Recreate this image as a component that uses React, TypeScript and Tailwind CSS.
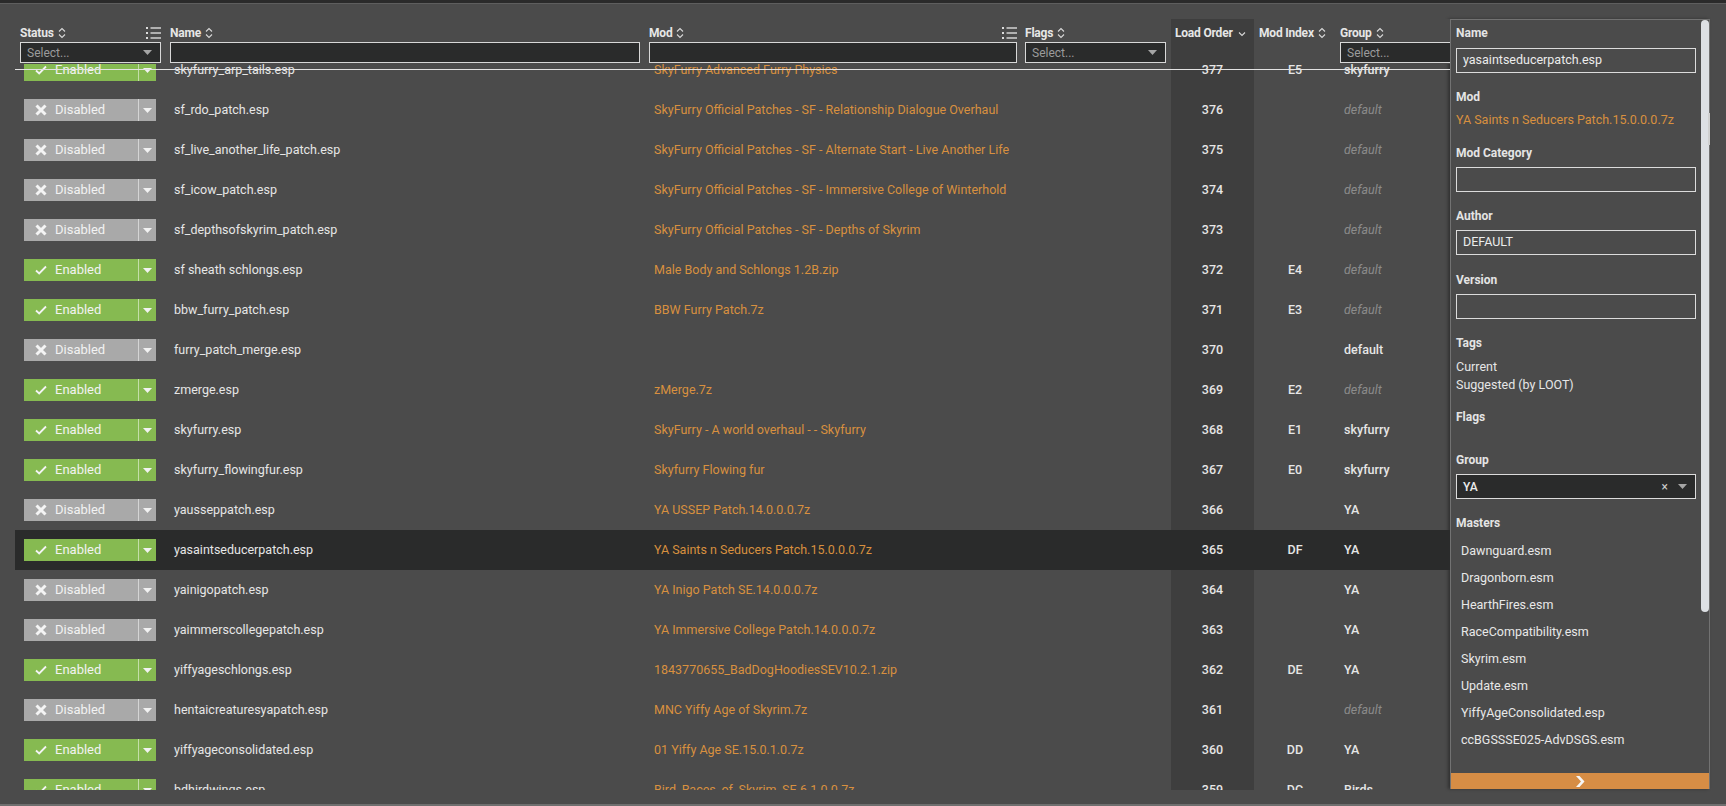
import React from "react";

type Row = {
  on: boolean;
  name: string;
  mod: string;
  lo: number;
  idx: string;
  group: string;
  dim?: boolean;
  selected?: boolean;
};

const ROWS: Row[] = [
  { on: true, name: "skyfurry_arp_tails.esp", mod: "SkyFurry Advanced Furry Physics", lo: 377, idx: "E5", group: "skyfurry" },
  { on: false, name: "sf_rdo_patch.esp", mod: "SkyFurry Official Patches - SF - Relationship Dialogue Overhaul", lo: 376, idx: "", group: "default", dim: true },
  { on: false, name: "sf_live_another_life_patch.esp", mod: "SkyFurry Official Patches - SF - Alternate Start - Live Another Life", lo: 375, idx: "", group: "default", dim: true },
  { on: false, name: "sf_icow_patch.esp", mod: "SkyFurry Official Patches - SF - Immersive College of Winterhold", lo: 374, idx: "", group: "default", dim: true },
  { on: false, name: "sf_depthsofskyrim_patch.esp", mod: "SkyFurry Official Patches - SF - Depths of Skyrim", lo: 373, idx: "", group: "default", dim: true },
  { on: true, name: "sf sheath schlongs.esp", mod: "Male Body and Schlongs 1.2B.zip", lo: 372, idx: "E4", group: "default", dim: true },
  { on: true, name: "bbw_furry_patch.esp", mod: "BBW Furry Patch.7z", lo: 371, idx: "E3", group: "default", dim: true },
  { on: false, name: "furry_patch_merge.esp", mod: "", lo: 370, idx: "", group: "default" },
  { on: true, name: "zmerge.esp", mod: "zMerge.7z", lo: 369, idx: "E2", group: "default", dim: true },
  { on: true, name: "skyfurry.esp", mod: "SkyFurry - A world overhaul - - Skyfurry", lo: 368, idx: "E1", group: "skyfurry" },
  { on: true, name: "skyfurry_flowingfur.esp", mod: "Skyfurry Flowing fur", lo: 367, idx: "E0", group: "skyfurry" },
  { on: false, name: "yausseppatch.esp", mod: "YA USSEP Patch.14.0.0.0.7z", lo: 366, idx: "", group: "YA" },
  { on: true, name: "yasaintseducerpatch.esp", mod: "YA Saints n Seducers Patch.15.0.0.0.7z", lo: 365, idx: "DF", group: "YA", selected: true },
  { on: false, name: "yainigopatch.esp", mod: "YA Inigo Patch SE.14.0.0.0.7z", lo: 364, idx: "", group: "YA" },
  { on: false, name: "yaimmerscollegepatch.esp", mod: "YA Immersive College Patch.14.0.0.0.7z", lo: 363, idx: "", group: "YA" },
  { on: true, name: "yiffyageschlongs.esp", mod: "1843770655_BadDogHoodiesSEV10.2.1.zip", lo: 362, idx: "DE", group: "YA" },
  { on: false, name: "hentaicreaturesyapatch.esp", mod: "MNC Yiffy Age of Skyrim.7z", lo: 361, idx: "", group: "default", dim: true },
  { on: true, name: "yiffyageconsolidated.esp", mod: "01 Yiffy Age SE.15.0.1.0.7z", lo: 360, idx: "DD", group: "YA" },
  { on: true, name: "bdhirdwings.esp", mod: "Bird_Races_of_Skyrim_SE.6.1.0.0.7z", lo: 359, idx: "DC", group: "Birds" },
];

const MASTERS = [
  "Dawnguard.esm",
  "Dragonborn.esm",
  "HearthFires.esm",
  "RaceCompatibility.esm",
  "Skyrim.esm",
  "Update.esm",
  "YiffyAgeConsolidated.esp",
  "ccBGSSSE025-AdvDSGS.esm",
];

function SortIcon() {
  return (
    <svg width="8" height="12" viewBox="0 0 8 12" className="ml-[4px] text-[#d8d8d8]">
      <path d="M1 4.5 L4 1.5 L7 4.5 M1 7.5 L4 10.5 L7 7.5" fill="none" stroke="currentColor" strokeWidth="1.1" />
    </svg>
  );
}

function SortDown() {
  return (
    <svg width="8" height="6" viewBox="0 0 8 6" className="ml-[5px] mt-[2px] text-[#d8d8d8]">
      <path d="M1 1.5 L4 4.5 L7 1.5" fill="none" stroke="currentColor" strokeWidth="1.1" />
    </svg>
  );
}

function ListIcon() {
  return (
    <svg width="15" height="12" viewBox="0 0 15 12" className="text-[#dcdcdc]">
      <rect x="0" y="0" width="2" height="2" fill="currentColor" />
      <rect x="0" y="5" width="2" height="2" fill="currentColor" />
      <rect x="0" y="10" width="2" height="2" fill="currentColor" />
      <rect x="4.5" y="0.3" width="10.5" height="1.4" fill="currentColor" />
      <rect x="4.5" y="5.3" width="10.5" height="1.4" fill="currentColor" />
      <rect x="4.5" y="10.3" width="10.5" height="1.4" fill="currentColor" />
    </svg>
  );
}

function Caret({ className }: { className?: string }) {
  return (
    <svg width="9" height="5" viewBox="0 0 9 5" className={className}>
      <path d="M0 0 H9 L4.5 5 Z" fill="currentColor" />
    </svg>
  );
}

function SelectBox({ width, placeholder = "Select..." }: { width: string; placeholder?: string }) {
  return (
    <div className={`${width} h-[21px] shrink-0 border border-[#d8d8d8] bg-[#2a2b2b] flex items-center justify-between pl-[6px] pr-[8px]`}>
      <span className="text-[12px] text-[#9b9b9b]">{placeholder}</span>
      <Caret className="text-[#a5a5a5]" />
    </div>
  );
}

function TextFilter({ width }: { width: string }) {
  return <div className={`${width} h-[21px] shrink-0 border border-[#d8d8d8] bg-[#2a2b2b]`} />;
}

function HeadTitle({ label, down }: { label: string; down?: boolean }) {
  return (
    <div className="flex items-center h-[16px]">
      <span className="text-[12px] font-bold text-[#e6e6e6] tracking-[-0.2px]">{label}</span>
      {down ? <SortDown /> : <SortIcon />}
    </div>
  );
}

function StatusButton({ on }: { on: boolean }) {
  return (
    <div className={`flex h-[22px] w-[132px] ${on ? "bg-[#86ba51]" : "bg-[#a9a9a9]"}`}>
      <div className="flex w-[114px] items-center pl-[11px]">
        {on ? (
          <svg width="12" height="10" viewBox="0 0 12 10" className="text-[#f4f4f4]">
            <path d="M1 5.5 L4.2 8.5 L11 1.5" fill="none" stroke="currentColor" strokeWidth="1.8" />
          </svg>
        ) : (
          <svg width="12" height="12" viewBox="0 0 12 12" className="text-[#f4f4f4]">
            <path d="M1.5 1.5 L10.5 10.5 M10.5 1.5 L1.5 10.5" fill="none" stroke="currentColor" strokeWidth="3" />
          </svg>
        )}
        <span className="ml-[8px] text-[13px] text-[#f2f2f2]">{on ? "Enabled" : "Disabled"}</span>
      </div>
      <div className={`w-px ${on ? "bg-[#c4dea9]" : "bg-[#d4d4d4]"}`} />
      <div className="flex flex-1 items-center justify-center">
        <Caret className="text-[#f2f2f2]" />
      </div>
    </div>
  );
}

function Table() {
  return (
    <div className="relative h-[771px] w-[1435px] shrink-0 overflow-hidden">
      {/* sticky header */}
      <div className="relative z-10 flex h-[45px] bg-[#4b4b4b]">
        <div className="w-[150px] shrink-0 pl-[5px] pr-[4px] pt-[6px]">
          <div className="flex items-center justify-between">
            <HeadTitle label="Status" />
            <ListIcon />
          </div>
          <div className="mt-[1px]">
            <SelectBox width="w-[141px]" />
          </div>
        </div>
        <div className="w-[480px] shrink-0 pl-[5px] pt-[6px]">
          <HeadTitle label="Name" />
          <div className="mt-[1px]">
            <TextFilter width="w-[470px]" />
          </div>
        </div>
        <div className="w-[376px] shrink-0 pl-[4px] pr-[4px] pt-[6px]">
          <div className="flex items-center justify-between">
            <HeadTitle label="Mod" />
            <ListIcon />
          </div>
          <div className="mt-[1px]">
            <TextFilter width="w-[368px]" />
          </div>
        </div>
        <div className="w-[150px] shrink-0 pl-[4px] pt-[6px]">
          <HeadTitle label="Flags" />
          <div className="mt-[1px]">
            <SelectBox width="w-[141px]" />
          </div>
        </div>
        <div className="w-[83px] shrink-0 bg-[#3e3e3e] pl-[4px] pt-[6px]">
          <HeadTitle label="Load Order" down />
        </div>
        <div className="w-[82px] shrink-0 pl-[5px] pt-[6px]">
          <HeadTitle label="Mod Index" />
        </div>
        <div className="flex-1 pl-[4px] pt-[6px]">
          <HeadTitle label="Group" />
          <div className="mt-[1px]">
            <SelectBox width="w-[141px]" />
          </div>
        </div>
      </div>
      <div className="absolute left-0 right-0 top-[50px] z-20 h-px bg-[#e2e2e2]" />

      {/* body, scrolled */}
      <div className="-mt-[14px]">
        {ROWS.map((r) => (
          <div key={r.lo} className={`flex h-[40px] items-center ${r.selected ? "bg-[#2a2b2b]" : ""}`}>
            <div className="w-[150px] shrink-0 pl-[9px]">
              <StatusButton on={r.on} />
            </div>
            <div className="w-[480px] shrink-0 pl-[9px] text-[12.5px] text-[#e6e6e6]">{r.name}</div>
            <div className="w-[376px] shrink-0 whitespace-nowrap pl-[9px] text-[12.5px] text-[#d8903f]">{r.mod}</div>
            <div className="w-[150px] shrink-0" />
            <div className={`flex h-full w-[83px] shrink-0 items-center justify-center text-[12.5px] font-medium text-[#e6e6e6] ${r.selected ? "" : "bg-[#3e3e3e]"}`}>
              {r.lo}
            </div>
            <div className="w-[82px] shrink-0 text-center text-[12.5px] font-medium text-[#e6e6e6]">{r.idx}</div>
            <div className={`flex-1 pl-[8px] text-[12.5px] ${r.dim ? "italic text-[#8b8b8b]" : "font-medium text-[#e6e6e6]"}`}>
              {r.group}
            </div>
          </div>
        ))}
      </div>
    </div>
  );
}

function Label({ children, className = "" }: { children: React.ReactNode; className?: string }) {
  return <div className={`h-[16px] text-[12px] font-bold leading-[16px] text-[#e4e4e4] ${className}`}>{children}</div>;
}

function Field({ value, className = "" }: { value?: string; className?: string }) {
  return (
    <div className={`flex h-[25px] w-[240px] items-center border border-[#dcdcdc] pl-[6px] text-[12.5px] text-[#ececec] ${className}`}>
      {value}
    </div>
  );
}

function Panel() {
  return (
    <div className="flex h-[770px] w-[260px] shrink-0 flex-col border-l border-r border-t border-[#727272] bg-[#4b4b4b] shadow-[-2px_0_3px_rgba(0,0,0,0.35)]">
      <div className="flex flex-1">
        <div className="w-[250px] pl-[5px] pt-[5px]">
          <Label>Name</Label>
          <Field value="yasaintseducerpatch.esp" className="mt-[7px]" />
          <Label className="mt-[16px]">Mod</Label>
          <div className="mt-[7px] h-[16px] text-[12.5px] leading-[16px] text-[#d8903f]">YA Saints n Seducers Patch.15.0.0.0.7z</div>
          <Label className="mt-[17px]">Mod Category</Label>
          <Field className="mt-[6px]" />
          <Label className="mt-[16px]">Author</Label>
          <Field value="DEFAULT" className="mt-[6px]" />
          <Label className="mt-[17px]">Version</Label>
          <Field className="mt-[6px]" />
          <Label className="mt-[16px]">Tags</Label>
          <div className="mt-[7px] text-[12.5px] leading-[18px] text-[#e6e6e6]">
            <div>Current</div>
            <div>Suggested (by LOOT)</div>
          </div>
          <Label className="mt-[15px]">Flags</Label>
          <Label className="mt-[27px]">Group</Label>
          <div className="mt-[6px] flex h-[25px] w-[240px] items-center border border-[#dcdcdc] bg-[#2a2b2b] pl-[6px] pr-[8px]">
            <span className="flex-1 text-[12px] font-medium text-[#ececec]">YA</span>
            <span className="mr-[10px] text-[12px] leading-none text-[#d0d0d0]">×</span>
            <Caret className="text-[#a5a5a5]" />
          </div>
          <Label className="mt-[16px]">Masters</Label>
          <div className="mt-[6px] pl-[5px]">
            {MASTERS.map((m) => (
              <div key={m} className="h-[27px] text-[12.5px] leading-[27px] text-[#e8e8e8]">
                {m}
              </div>
            ))}
          </div>
        </div>
        <div className="h-[592px] w-[8px] rounded-full bg-[#dde0e4]" />
      </div>
      <div className="flex h-[16px] items-center justify-center bg-[#d68d45]">
        <svg width="10" height="11" viewBox="0 0 10 11" className="text-[#f6f6f6]">
          <path d="M1 0 H4.5 L9.5 5.5 L4.5 11 H1 L6 5.5 Z" fill="currentColor" />
        </svg>
      </div>
    </div>
  );
}

export default function App() {
  return (
    <div className="flex h-[806px] w-full flex-col overflow-hidden bg-[#4b4b4b] font-[Roboto,sans-serif]">
      <div className="h-[4px] shrink-0 border-b border-[#5e5e5e] bg-[#2a2a2a]" />
      <div className="mt-[15px] flex h-[771px] shrink-0 pl-[15px]">
        <Table />
        <Panel />
        <div className="flex-1 pt-[94px]">
          <div className="-ml-[2px] h-[32px] w-[2px] bg-[#d0d0d0]" />
        </div>
      </div>
      <div className="flex-1" />
      <div className="h-[2px] shrink-0 bg-[#6f6f6f]" />
    </div>
  );
}
